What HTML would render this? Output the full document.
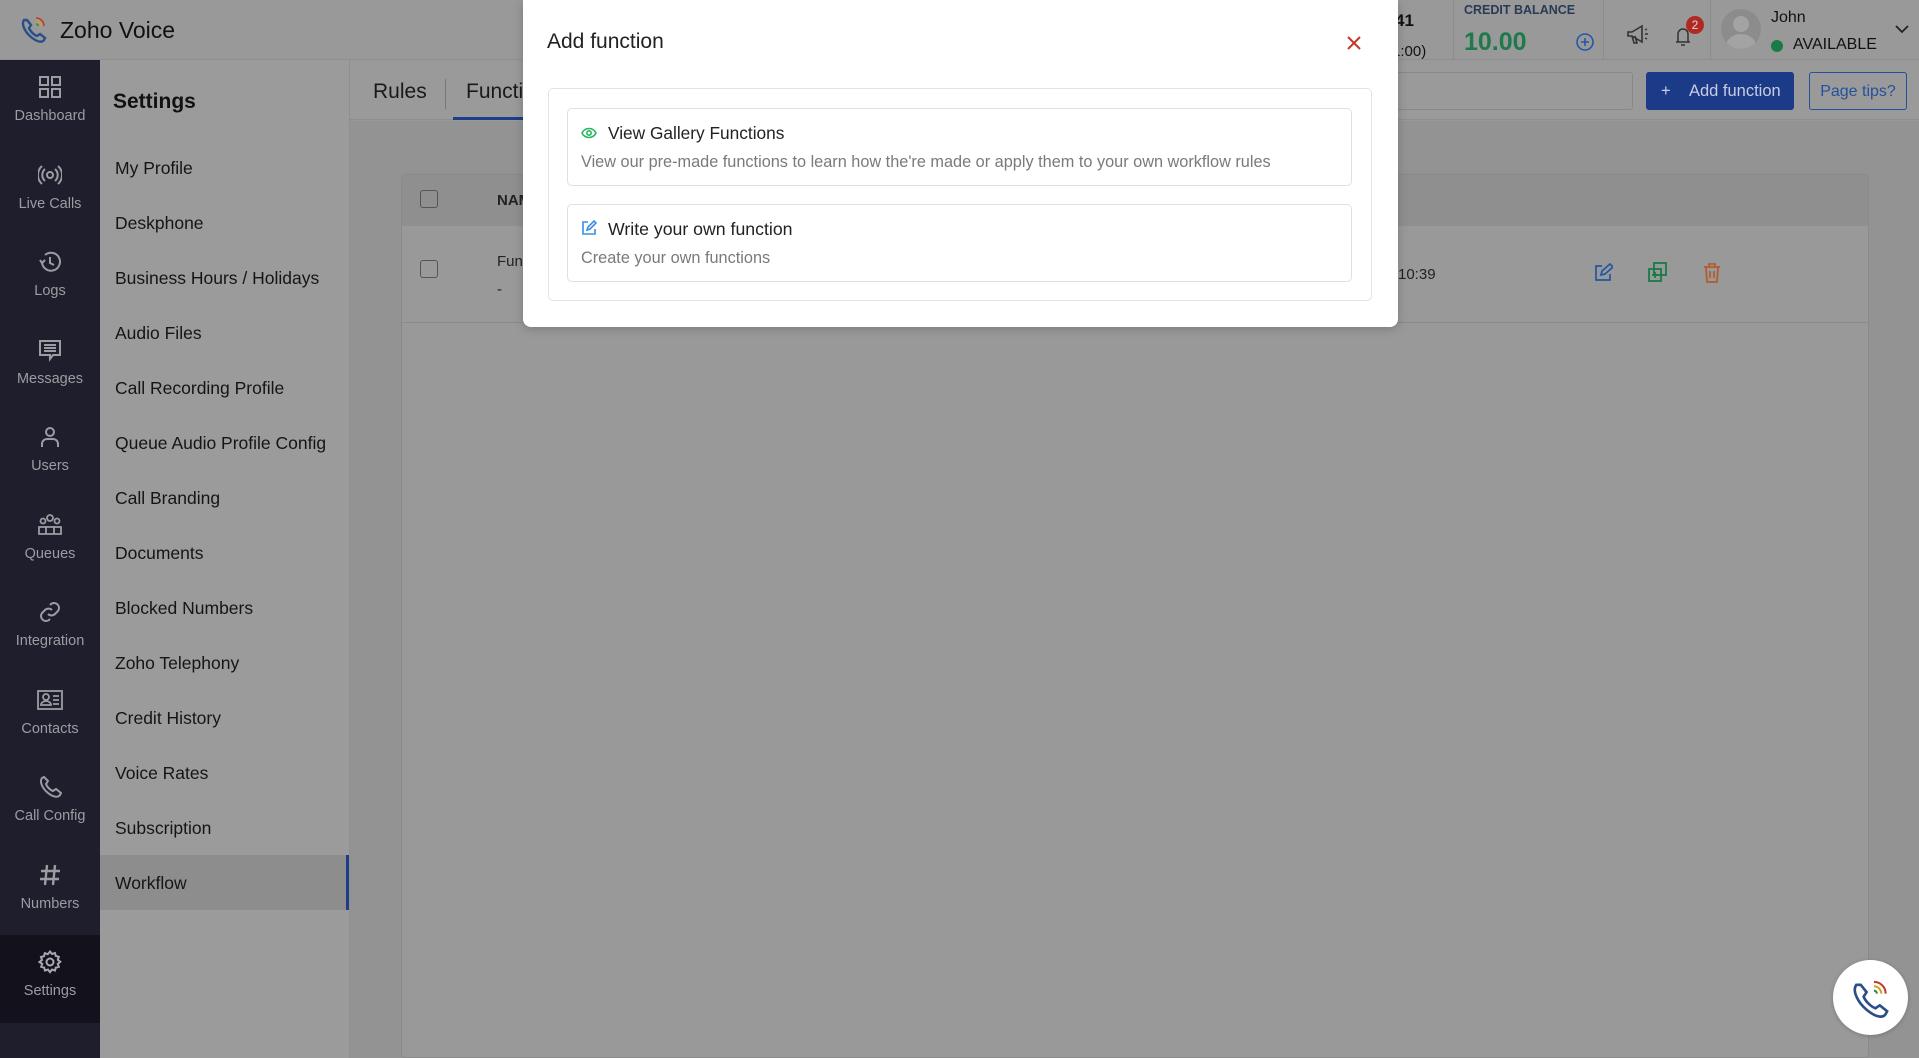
<!DOCTYPE html>
<html><head><meta charset="utf-8"><style>
*{margin:0;padding:0;box-sizing:border-box}
body{width:1919px;height:1058px;overflow:hidden;position:relative;background:#999;font-family:"Liberation Sans",sans-serif;color:#111}
.a{position:absolute}
.side{left:0;top:60px;width:100px;height:998px;background:#1f1e2d}
.si{position:absolute;left:0;width:100px;text-align:center;color:#9c9ca2;font-size:14.5px}
.si svg{display:block;margin:0 auto 9px}
.set{left:100px;top:60px;width:249px;height:998px;background:#9b9b9b}
.it{position:absolute;left:15px;font-size:17.5px;color:#151515;line-height:22px}
.tc{position:absolute;font-size:15px;color:#222}
</style></head><body>
<!-- header -->
<div class="a" style="left:0;top:0;width:1919px;height:60px;background:#999;border-bottom:1px solid #8e8e8e"></div>
<svg class="a" style="left:20px;top:14px" width="28" height="30" viewBox="0 0 28 30"><path d="M4 6c-3 4 1 12 7 17s11 6 13 3l1-2-5-4-3 2c-3-1-7-5-8-8l2-3-4-5z" fill="none" stroke="#2a4f87" stroke-width="2.4"/><path d="M16 4a8 8 0 0 1 8 8" stroke="#c0392b" stroke-width="1.6" fill="none"/><path d="M16 7a5 5 0 0 1 5 5" stroke="#d8a020" stroke-width="1.6" fill="none"/><path d="M16 10a2 2 0 0 1 2 2" stroke="#2a8a4a" stroke-width="1.6" fill="none"/></svg>
<div class="a" style="left:60px;top:17px;font-size:23px;color:#111">Zoho Voice</div>
<div class="a" style="left:1395px;top:11px;font-size:17px;font-weight:bold;color:#111">41</div>
<div class="a" style="left:1392px;top:43px;font-size:15px;color:#111">1:00)</div>
<div class="a" style="left:1453px;top:0;width:1px;height:60px;background:#8c8c8c"></div>
<div class="a" style="left:1464px;top:3px;font-size:12.5px;font-weight:bold;color:#283a55">CREDIT BALANCE</div>
<div class="a" style="left:1464px;top:28px;font-size:25px;font-weight:bold;color:#1e7a4a">10.00</div>
<svg class="a" style="left:1575px;top:32px" width="20" height="20"><circle cx="10" cy="10" r="8" fill="none" stroke="#2657a8" stroke-width="1.6"/><path d="M10 6v8M6 10h8" stroke="#2657a8" stroke-width="1.6"/></svg>
<div class="a" style="left:1603px;top:0;width:1px;height:60px;background:#8c8c8c"></div>
<svg class="a" style="left:1626px;top:24px" width="24" height="22" viewBox="0 0 24 22"><path d="M2 8h4l10-6v16L6 12H2z M6 12l2 7h3l-2-7" fill="none" stroke="#333" stroke-width="1.6"/><path d="M19 6l2-1M19 10h3M19 14l2 1" stroke="#333" stroke-width="1.4"/></svg>
<svg class="a" style="left:1672px;top:24px" width="22" height="24"><path d="M4 18h14M6 18V10a5 5 0 0 1 10 0v8M9 21h4" fill="none" stroke="#333" stroke-width="1.5"/></svg>
<div class="a" style="left:1686px;top:16px;width:18px;height:18px;border-radius:50%;background:#b02a23;color:#ddd;font-size:12px;text-align:center;line-height:18px">2</div>
<div class="a" style="left:1710px;top:0;width:1px;height:60px;background:#8c8c8c"></div>
<div class="a" style="left:1721px;top:9px;width:40px;height:40px;border-radius:50%;background:#8c8c8c;overflow:hidden"><div class="a" style="left:12px;top:7px;width:16px;height:16px;border-radius:50%;background:#a3a3a3"></div><div class="a" style="left:5px;top:25px;width:30px;height:24px;border-radius:50%;background:#a3a3a3"></div></div>
<div class="a" style="left:1771px;top:9px;font-size:16px;color:#111">John</div>
<div class="a" style="left:1771px;top:40px;width:12px;height:12px;border-radius:50%;background:#1a7a48"></div>
<div class="a" style="left:1793px;top:36px;font-size:16px;color:#111">AVAILABLE</div>
<svg class="a" style="left:1894px;top:24px" width="16" height="10"><path d="M2 2l6 6 6-6" fill="none" stroke="#222" stroke-width="1.8"/></svg>

<!-- sidebar -->
<div class="a side">
<div class="si" style="top:15px"><svg width="24" height="24"><g fill="none" stroke="#9c9ca2" stroke-width="2"><rect x="2" y="2" width="8" height="8"/><rect x="14" y="2" width="8" height="8"/><rect x="2" y="14" width="8" height="8"/><rect x="14" y="14" width="8" height="8"/></g></svg>Dashboard</div>
<div class="si" style="top:103px"><svg width="24" height="24"><g fill="none" stroke="#9c9ca2" stroke-width="2"><circle cx="12" cy="12" r="3"/><path d="M7 6a8 8 0 0 0 0 12M17 6a8 8 0 0 1 0 12M4 3a12 12 0 0 0 0 18M20 3a12 12 0 0 1 0 18"/></g></svg>Live Calls</div>
<div class="si" style="top:190px"><svg width="24" height="24"><g fill="none" stroke="#9c9ca2" stroke-width="2"><path d="M4 12a9 9 0 1 0 3-7"/><path d="M2 10l2 3 3-3M12 7v6l4 2"/></g></svg>Logs</div>
<div class="si" style="top:278px"><svg width="24" height="24"><g fill="none" stroke="#9c9ca2" stroke-width="2"><path d="M2 3h20v14H15l-3 4v-4H2z"/><path d="M6 7h12M6 10h12M6 13h12"/></g></svg>Messages</div>
<div class="si" style="top:365px"><svg width="24" height="24"><g fill="none" stroke="#9c9ca2" stroke-width="2"><circle cx="12" cy="7" r="4"/><path d="M4 22v-3a5 5 0 0 1 5-5h6a5 5 0 0 1 5 5v3"/></g></svg>Users</div>
<div class="si" style="top:453px"><svg width="26" height="24"><g fill="none" stroke="#9c9ca2" stroke-width="1.8"><circle cx="13" cy="5" r="3"/><circle cx="6" cy="8" r="2.5"/><circle cx="20" cy="8" r="2.5"/><path d="M2 21v-7h22v7zM9 21v-8M17 21v-8"/></g></svg>Queues</div>
<div class="si" style="top:540px"><svg width="24" height="24"><g fill="none" stroke="#9c9ca2" stroke-width="2"><path d="M10 14a5 5 0 0 0 7 0l3-3a5 5 0 0 0-7-7l-1 1"/><path d="M14 10a5 5 0 0 0-7 0l-3 3a5 5 0 0 0 7 7l1-1"/></g></svg>Integration</div>
<div class="si" style="top:628px"><svg width="26" height="24"><g fill="none" stroke="#9c9ca2" stroke-width="1.8"><rect x="1" y="3" width="24" height="18"/><circle cx="9" cy="9" r="3"/><path d="M4 17a5 4 0 0 1 10 0zM16 8h6M16 12h6M16 16h6"/></g></svg>Contacts</div>
<div class="si" style="top:715px"><svg width="24" height="24"><path d="M4 3c-3 4 1 11 6 15s10 5 12 2l1-2-5-4-3 2c-3-1-6-4-7-7l2-3-4-4z" fill="none" stroke="#9c9ca2" stroke-width="2"/></svg>Call Config</div>
<div class="si" style="top:803px"><svg width="24" height="24"><path d="M9 2L7 22M17 2l-2 20M3 8h19M2 16h19" stroke="#9c9ca2" stroke-width="2.4"/></svg>Numbers</div>
<div class="a" style="left:0;top:875px;width:100px;height:88px;background:#12111c"></div>
<div class="si" style="top:890px"><svg width="24" height="24"><g fill="none" stroke="#a8a8ae" stroke-width="2"><circle cx="12" cy="12" r="3.5"/><path d="M12 1.5l2 2.5 3-1 .8 3 3 .8-1 3 2.5 2-2.5 2 1 3-3 .8-.8 3-3-1-2 2.5-2-2.5-3 1-.8-3-3-.8 1-3L1.5 12 4 10 3 7l3-.8L6.8 3.2l3 1z"/></g></svg>Settings</div>
</div>

<!-- settings panel -->
<div class="a set">
<div class="a" style="left:13px;top:30px;font-size:21px;font-weight:bold;color:#111">Settings</div>
<div class="it" style="top:97px">My Profile</div>
<div class="it" style="top:152px">Deskphone</div>
<div class="it" style="top:207px">Business Hours / Holidays</div>
<div class="it" style="top:262px">Audio Files</div>
<div class="it" style="top:317px">Call Recording Profile</div>
<div class="it" style="top:372px">Queue Audio Profile Config</div>
<div class="it" style="top:427px">Call Branding</div>
<div class="it" style="top:482px">Documents</div>
<div class="it" style="top:537px">Blocked Numbers</div>
<div class="it" style="top:592px">Zoho Telephony</div>
<div class="it" style="top:647px">Credit History</div>
<div class="it" style="top:702px">Voice Rates</div>
<div class="it" style="top:757px">Subscription</div>
<div class="a" style="left:0;top:795px;width:249px;height:55px;background:#8d8d8d;border-right:3px solid #1c3d8a"></div>
<div class="it" style="top:812px">Workflow</div>
</div>
<div class="a" style="left:349px;top:60px;width:1px;height:998px;background:#8f8f8f"></div>

<!-- main -->
<div class="a" style="left:350px;top:60px;width:1569px;height:60px;background:#9a9a9a;border-bottom:1px solid #8e8e8e"></div>
<div class="a" style="left:373px;top:80px;font-size:21px;color:#1a1a1a">Rules</div>
<div class="a" style="left:445px;top:79px;width:1px;height:30px;background:#777"></div>
<div class="a" style="left:466px;top:80px;font-size:21px;color:#1a1a1a">Functions</div>
<div class="a" style="left:453px;top:117px;width:120px;height:3px;background:#1c3d8a"></div>
<div class="a" style="left:1300px;top:72px;width:333px;height:38px;border:1px solid #888;border-radius:3px"></div>
<div class="a" style="left:1646px;top:72px;width:148px;height:38px;background:#1b3a88;border-radius:3px;color:#c8cde0;font-size:16.5px;line-height:39px;padding-left:15px">+&nbsp;&nbsp;&nbsp;&nbsp;Add function</div>
<div class="a" style="left:1809px;top:72px;width:98px;height:38px;border:1px solid #24509c;border-radius:3px;color:#24509c;font-size:16px;line-height:38px;text-align:center">Page tips?</div>
<div class="a" style="left:350px;top:121px;width:1569px;height:937px;background:#939393"></div>
<div class="a" style="left:401px;top:174px;width:1468px;height:884px;background:#999;border:1px solid #8a8a8a;border-radius:4px"></div>
<div class="a" style="left:402px;top:175px;width:1466px;height:51px;background:#8f8f8f"></div>
<div class="a" style="left:420px;top:190px;width:18px;height:18px;border:1px solid #555;border-radius:3px"></div>
<div class="tc" style="left:497px;top:192px;font-weight:bold">NAME</div>
<div class="a" style="left:402px;top:322px;width:1466px;height:1px;background:#8a8a8a"></div>
<div class="a" style="left:420px;top:260px;width:18px;height:18px;border:1px solid #555;border-radius:3px"></div>
<div class="tc" style="left:497px;top:253px">Fun</div>
<div class="tc" style="left:497px;top:281px">-</div>
<div class="tc" style="left:1398px;top:266px">10:39</div>
<svg class="a" style="left:1593px;top:263px" width="20" height="20"><path d="M9 3H3v14h14v-6M8 12l1-4 8-7 3 3-8 7z" fill="none" stroke="#2057a0" stroke-width="1.7"/></svg>
<svg class="a" style="left:1648px;top:262px" width="20" height="20"><g fill="none" stroke="#1a7a48" stroke-width="1.8"><rect x="6" y="1" width="12" height="12"/><rect x="1" y="7" width="12" height="12"/><path d="M7 10v6M4 13h6"/></g></svg>
<svg class="a" style="left:1703px;top:263px" width="18" height="20"><g fill="none" stroke="#b35a2a" stroke-width="1.7"><path d="M1 4h16M6 4V1h6v3M3 4l1 15h10l1-15M7 8v7M11 8v7"/></g></svg>
<div class="a" style="left:1833px;top:960px;width:75px;height:75px;border-radius:50%;background:#fff;box-shadow:0 1px 4px rgba(0,0,0,.2)"></div>
<svg class="a" style="left:1850px;top:976px" width="42" height="44" viewBox="0 0 28 30"><path d="M4 6c-3 4 1 12 7 17s11 6 13 3l1-2-5-4-3 2c-3-1-7-5-8-8l2-3-4-5z" fill="none" stroke="#2a4f87" stroke-width="1.8"/><path d="M16 4a8 8 0 0 1 8 8" stroke="#c0392b" stroke-width="1.4" fill="none"/><path d="M16 7a5 5 0 0 1 5 5" stroke="#d8a020" stroke-width="1.4" fill="none"/><path d="M16 10a2 2 0 0 1 2 2" stroke="#2a8a4a" stroke-width="1.4" fill="none"/></svg>

<!-- modal -->
<div class="a" style="left:523px;top:0;width:875px;height:327px;background:#fff;border-radius:0 0 8px 8px;box-shadow:0 2px 10px rgba(0,0,0,.2)">
<div class="a" style="left:24px;top:30px;font-size:21px;color:#222">Add function</div>
<svg class="a" style="left:823px;top:35px" width="16" height="16"><path d="M2 2l12 12M14 2L2 14" stroke="#c0392b" stroke-width="2"/></svg>
<div class="a" style="left:25px;top:88px;width:824px;height:213px;border:1px solid #e3e3e3;border-radius:5px"></div>
<div class="a" style="left:44px;top:108px;width:785px;height:78px;border:1px solid #e0e0e0;border-radius:5px">
<svg class="a" style="left:13px;top:17px" width="16" height="14"><path d="M1 7c3-6 11-6 14 0c-3 6-11 6-14 0z" fill="none" stroke="#2bb463" stroke-width="1.6"/><circle cx="8" cy="7" r="2.2" fill="none" stroke="#2bb463" stroke-width="1.6"/></svg>
<div class="a" style="left:40px;top:14px;font-size:17.3px;color:#222">View Gallery Functions</div>
<div class="a" style="left:13px;top:44px;font-size:16.3px;color:#7a7a7a">View our pre-made functions to learn how the're made or apply them to your own workflow rules</div>
</div>
<div class="a" style="left:44px;top:204px;width:785px;height:78px;border:1px solid #e0e0e0;border-radius:5px">
<svg class="a" style="left:13px;top:15px" width="16" height="16"><path d="M7 2H2v12h12V9M6 10l1-3 6-6 2 2-6 6z" fill="none" stroke="#3a8ee6" stroke-width="1.6"/></svg>
<div class="a" style="left:40px;top:14px;font-size:17.7px;color:#222">Write your own function</div>
<div class="a" style="left:13px;top:44px;font-size:16.3px;color:#7a7a7a">Create your own functions</div>
</div>
</div>
</body></html>
